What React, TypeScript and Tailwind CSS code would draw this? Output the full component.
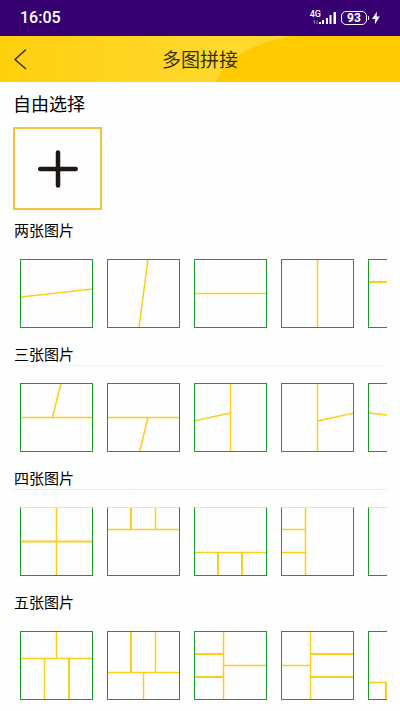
type Line = [x1: number, y1: number, x2: number, y2: number, width?: number];

interface Section {
  title: string;
  rule: string;
  tile: string;
  layouts: Line[][];
}

const TILE = 'border-[#1f9a28]';

// Split lines are given in tile coordinates, 73 x 69
const SECTIONS: Section[] = [
  {
    title: '两张图片',
    rule: 'border-[#fafafa]',
    tile: TILE,
    layouts: [
      [[0, 38, 73, 30]],
      [[41, 0, 32, 69]],
      [[0, 34.5, 73, 34.5]],
      [[36.5, 0, 36.5, 69]],
      [[0, 23, 73, 23, 2]],
    ],
  },
  {
    title: '三张图片',
    rule: 'border-[#f3f3f3]',
    tile: TILE,
    layouts: [
      [[0, 34.5, 73, 34.5], [41, 0, 32.5, 34.5]],
      [[0, 34.5, 73, 34.5], [41, 34.5, 32.5, 69]],
      [[36.5, 0, 36.5, 69], [0, 38, 36.5, 30]],
      [[36.5, 0, 36.5, 69], [36.5, 38, 73, 30]],
      [[0, 30, 73, 38]],
    ],
  },
  {
    title: '四张图片',
    rule: 'border-[#ebebeb]',
    tile: 'border-[#1f9a28] border-t-[#cdf2cd]',
    layouts: [
      [[36.5, 0, 36.5, 69], [0, 34.5, 73, 34.5, 2]],
      [[0, 22.5, 73, 22.5], [24, 0, 24, 22.5, 2], [48.5, 0, 48.5, 22.5]],
      [[0, 45.5, 73, 45.5], [24, 45.5, 24, 69, 2], [48, 45.5, 48, 69, 2]],
      [[24.5, 0, 24.5, 69], [0, 22.5, 24.5, 22.5], [0, 45.5, 24.5, 45.5]],
      [[48.5, 0, 48.5, 69], [48.5, 22.5, 73, 22.5], [48.5, 45.5, 73, 45.5]],
    ],
  },
  {
    title: '五张图片',
    rule: 'border-transparent',
    tile: TILE,
    layouts: [
      [[0, 27.5, 73, 27.5], [36.5, 0, 36.5, 27.5], [24.5, 27.5, 24.5, 69], [49, 27.5, 49, 69, 2]],
      [[0, 41.5, 73, 41.5], [24, 0, 24, 41.5, 2], [48.5, 0, 48.5, 41.5], [36.5, 41.5, 36.5, 69]],
      [[29.5, 0, 29.5, 69], [0, 23, 29.5, 23, 2], [0, 46, 29.5, 46, 2], [29.5, 34.5, 73, 34.5]],
      [[29.5, 0, 29.5, 69], [29.5, 23, 73, 23, 2], [29.5, 46, 73, 46, 2], [0, 34.5, 29.5, 34.5]],
      [[0, 51.5, 73, 51.5], [18, 51.5, 18, 69, 2], [36.5, 51.5, 36.5, 69], [55, 51.5, 55, 69, 2]],
    ],
  },
];

function StatusBar() {
  return (
    <div className="flex h-9 items-center justify-between bg-[#370070] px-5 font-['Roboto',sans-serif] text-white">
      <span className="text-base leading-5 font-medium">16:05</span>
      <div className="flex items-center">
        <div className="flex h-4 items-start">
          <span className="text-[9px] leading-[9px] font-medium">4G</span>
          <svg className="-ml-2 h-4 w-6" viewBox="0 0 24 16" fill="#fff" aria-hidden="true">
            <path d="M1.500 14v-3.500l-1.200 1.200M4 10.500v3.500l1.200-1.200" stroke="#9b7fb8" fill="none" strokeWidth="0.800" />
            <rect x="6" y="12" width="2" height="2" />
            <rect x="9" y="10" width="2" height="4" />
            <rect x="13" y="8" width="2" height="6" />
            <rect x="16.500" y="5" width="2" height="9" rx="0.500" />
            <rect x="20.500" y="2" width="2.500" height="12" rx="0.500" />
          </svg>
        </div>
        <span className="ml-1 flex h-[14px] w-[26px] items-center justify-center rounded-[5px] border border-white text-xs leading-3 font-bold">
          93
        </span>
        <span className="ml-px h-1 w-px rounded-r bg-white" />
        <svg className="ml-[3px] h-[14px] w-2" viewBox="0 0 8 14" fill="#fff" aria-hidden="true">
          <path d="M5 0.500 0 8h3.200L2.800 13.500 7.800 5.500H4.600z" />
        </svg>
      </div>
    </div>
  );
}

function Header() {
  return (
    <header className="relative flex h-[46px] items-center justify-center bg-linear-to-r from-[#ffd00c] to-[#ffd92e] to-60%">
      <svg
        className="absolute inset-0 size-full"
        viewBox="0 0 400 46"
        preserveAspectRatio="none"
        aria-hidden="true"
      >
        <path d="M216 46Q230 11 293 0H400V46z" fill="#ffca00" />
      </svg>
      <button type="button" aria-label="返回" className="absolute left-2 p-1">
        <svg className="h-6 w-4" viewBox="0 0 16 24" fill="none" stroke="#37310f" strokeWidth="1.500">
          <path d="M14 2.500 3 12.500 14 22" />
        </svg>
      </button>
      <h1 className="relative text-[19px] leading-6 text-[#37310f]">多图拼接</h1>
    </header>
  );
}

function LayoutTile({ lines, label, border }: { lines: Line[]; label: string; border: string }) {
  return (
    <button type="button" aria-label={label} className={`h-[69px] w-[73px] shrink-0 border ${border}`}>
      <svg className="block size-full" viewBox="1 1 71 67" stroke="#f8d01c">
        {lines.map(([x1, y1, x2, y2, width = 1.5], i) => (
          <line key={i} x1={x1} y1={y1} x2={x2} y2={y2} strokeWidth={width} />
        ))}
      </svg>
    </button>
  );
}

export default function App() {
  return (
    <div className="min-h-screen bg-[#fefefe] font-['Noto_Sans_CJK_SC',sans-serif] text-black">
      <StatusBar />
      <Header />
      <main className="px-[13px] pt-[11px]">
        <h2 className="text-lg leading-5">自由选择</h2>
        <button
          type="button"
          aria-label="添加图片"
          className="mt-[14px] mb-[10px] flex h-[83px] w-[89px] items-center justify-center border-2 border-[#efc543]"
        >
          <svg className="size-10" viewBox="0 0 40 40" stroke="#211614" strokeWidth="4.500" strokeLinecap="round">
            <path d="M20 3.500v33M2.200 20h35.500" />
          </svg>
        </button>
        {SECTIONS.map((section) => (
          <section key={section.title} className="mb-4">
            <h2 className={`h-[22px] border-b pl-px text-[15px] leading-5 ${section.rule}`}>{section.title}</h2>
            <div className="mt-[17px] flex gap-[14px] overflow-x-auto pl-[7px] [scrollbar-width:none]">
              {section.layouts.map((lines, i) => (
                <LayoutTile key={i} lines={lines} label={`${section.title} ${i + 1}`} border={section.tile} />
              ))}
            </div>
          </section>
        ))}
      </main>
    </div>
  );
}
